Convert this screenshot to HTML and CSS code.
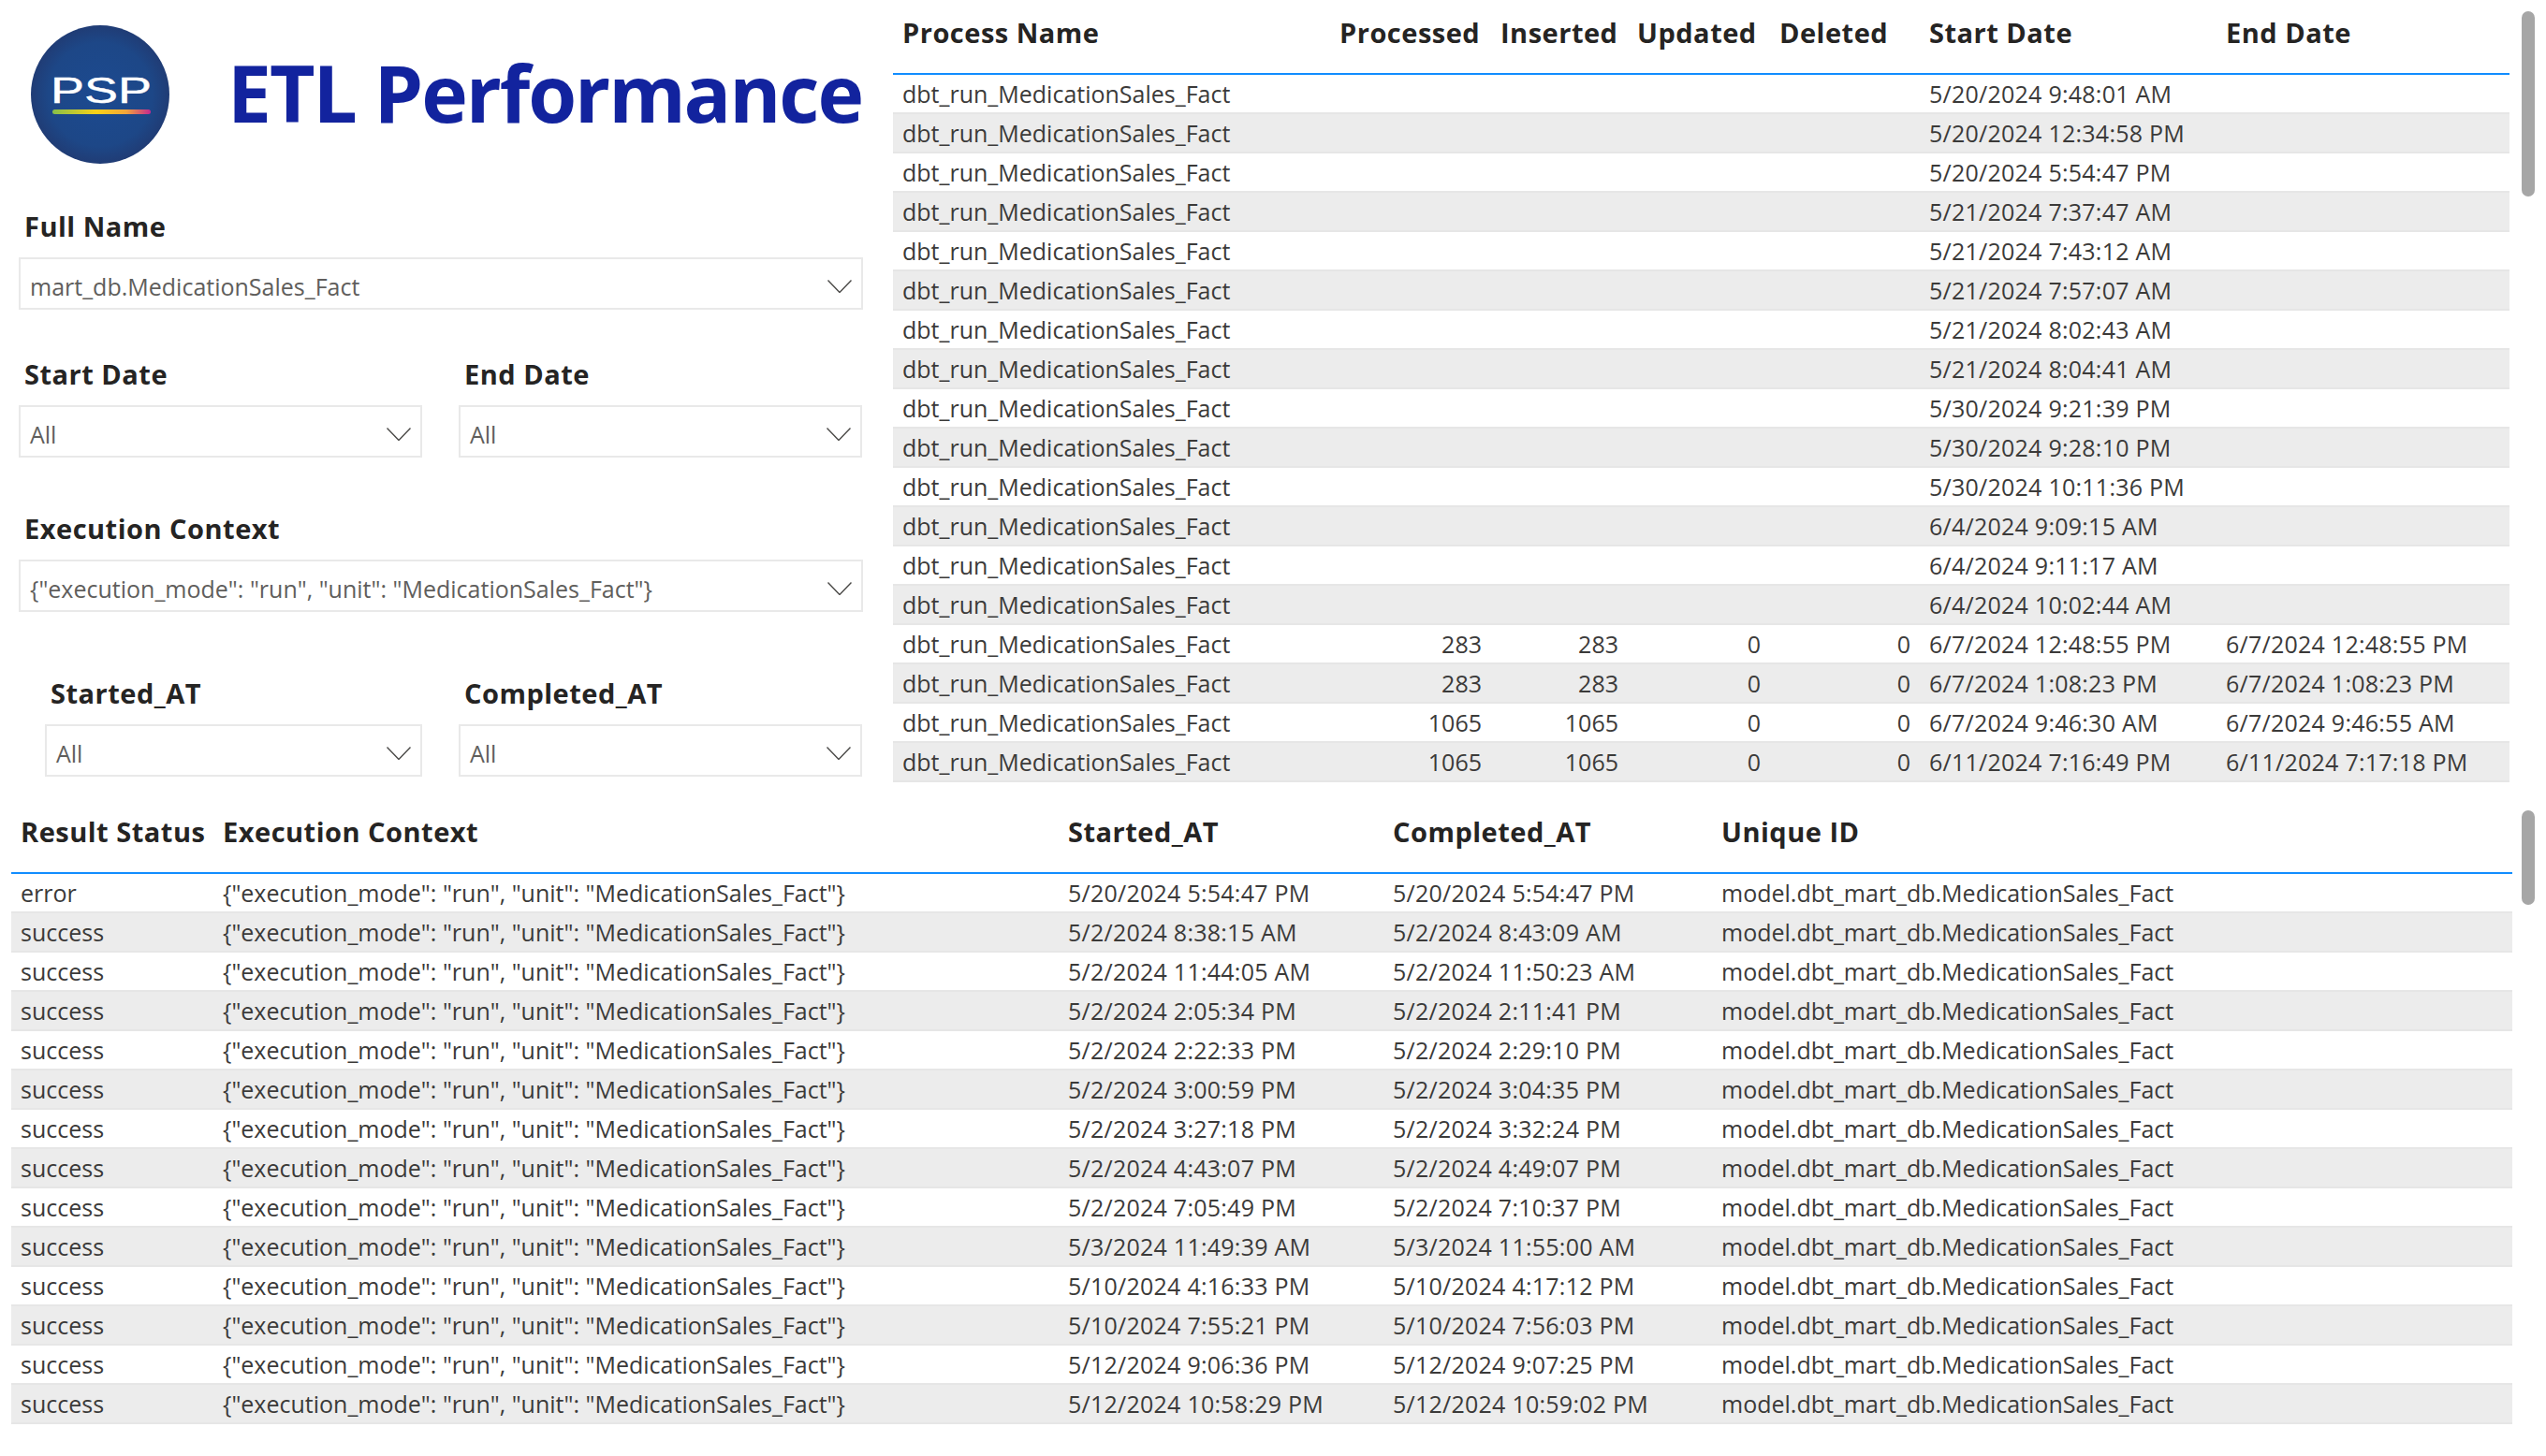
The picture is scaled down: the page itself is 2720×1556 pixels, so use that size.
FILE: index.html
```html
<!DOCTYPE html>
<html lang="en">
<head>
  <meta charset="UTF-8">
  <title>ETL Performance</title>
  <link rel="stylesheet" href="styles.css">
</head>
<body>

  <section class="topSection">
    <aside class="filters">
      <header class="brand">
        <svg class="brand__logo" viewBox="0 0 148 148">
          <defs>
            <radialGradient id="logoBg" cx="50%" cy="50%" r="50%">
              <stop offset="0" stop-color="#1c4a90"/>
              <stop offset="0.75" stop-color="#1d4787"/>
              <stop offset="1" stop-color="#203c75"/>
            </radialGradient>
            <linearGradient id="logoBar">
              <stop offset="0" stop-color="#86bf4a"/>
              <stop offset="0.45" stop-color="#fbd116"/>
              <stop offset="0.75" stop-color="#f2a53a"/>
              <stop offset="1" stop-color="#c4278f"/>
            </linearGradient>
          </defs>
          <circle cx="74" cy="74" r="74" fill="url(#logoBg)"/>
          <text class="brand__logoText" x="21" y="83" textLength="108" lengthAdjust="spacingAndGlyphs">PSP</text>
          <rect x="23" y="90" width="105" height="5" rx="2.5" fill="url(#logoBar)"/>
        </svg>
        <h1 class="brand__title">ETL Performance</h1>
      </header>

      <div class="filter filter--fullName">
        <span class="filter__label">Full Name</span>
        <div class="filter__box">
          <span class="filter__value">mart_db.MedicationSales_Fact</span>
          <svg class="filter__chevron" viewBox="0 0 26 14"><polyline points="0.5,0.5 13,13.5 25.5,0.5"/></svg>
        </div>
      </div>

      <div class="filterRow filterRow--dates">
        <div class="filter">
          <span class="filter__label">Start Date</span>
          <div class="filter__box">
            <span class="filter__value">All</span>
            <svg class="filter__chevron" viewBox="0 0 26 14"><polyline points="0.5,0.5 13,13.5 25.5,0.5"/></svg>
          </div>
        </div>
        <div class="filter">
          <span class="filter__label">End Date</span>
          <div class="filter__box">
            <span class="filter__value">All</span>
            <svg class="filter__chevron" viewBox="0 0 26 14"><polyline points="0.5,0.5 13,13.5 25.5,0.5"/></svg>
          </div>
        </div>
      </div>

      <div class="filter filter--context">
        <span class="filter__label">Execution Context</span>
        <div class="filter__box">
          <span class="filter__value">{"execution_mode": "run", "unit": "MedicationSales_Fact"}</span>
          <svg class="filter__chevron" viewBox="0 0 26 14"><polyline points="0.5,0.5 13,13.5 25.5,0.5"/></svg>
        </div>
      </div>

      <div class="filterRow filterRow--times">
        <div class="filter filter--indented">
          <span class="filter__label">Started_AT</span>
          <div class="filter__box">
            <span class="filter__value">All</span>
            <svg class="filter__chevron" viewBox="0 0 26 14"><polyline points="0.5,0.5 13,13.5 25.5,0.5"/></svg>
          </div>
        </div>
        <div class="filter">
          <span class="filter__label">Completed_AT</span>
          <div class="filter__box">
            <span class="filter__value">All</span>
            <svg class="filter__chevron" viewBox="0 0 26 14"><polyline points="0.5,0.5 13,13.5 25.5,0.5"/></svg>
          </div>
        </div>
      </div>
    </aside>

    <div class="processList">
      <div class="processList__header">
        <span>Process Name</span>
        <span>Processed</span>
        <span>Inserted</span>
        <span>Updated</span>
        <span>Deleted</span>
        <span>Start Date</span>
        <span>End Date</span>
      </div>
      <div class="processList__row"><span>dbt_run_MedicationSales_Fact</span><span class="num"></span><span class="num"></span><span class="num"></span><span class="num"></span><span>5/20/2024 9:48:01 AM</span><span></span></div>
      <div class="processList__row"><span>dbt_run_MedicationSales_Fact</span><span class="num"></span><span class="num"></span><span class="num"></span><span class="num"></span><span>5/20/2024 12:34:58 PM</span><span></span></div>
      <div class="processList__row"><span>dbt_run_MedicationSales_Fact</span><span class="num"></span><span class="num"></span><span class="num"></span><span class="num"></span><span>5/20/2024 5:54:47 PM</span><span></span></div>
      <div class="processList__row"><span>dbt_run_MedicationSales_Fact</span><span class="num"></span><span class="num"></span><span class="num"></span><span class="num"></span><span>5/21/2024 7:37:47 AM</span><span></span></div>
      <div class="processList__row"><span>dbt_run_MedicationSales_Fact</span><span class="num"></span><span class="num"></span><span class="num"></span><span class="num"></span><span>5/21/2024 7:43:12 AM</span><span></span></div>
      <div class="processList__row"><span>dbt_run_MedicationSales_Fact</span><span class="num"></span><span class="num"></span><span class="num"></span><span class="num"></span><span>5/21/2024 7:57:07 AM</span><span></span></div>
      <div class="processList__row"><span>dbt_run_MedicationSales_Fact</span><span class="num"></span><span class="num"></span><span class="num"></span><span class="num"></span><span>5/21/2024 8:02:43 AM</span><span></span></div>
      <div class="processList__row"><span>dbt_run_MedicationSales_Fact</span><span class="num"></span><span class="num"></span><span class="num"></span><span class="num"></span><span>5/21/2024 8:04:41 AM</span><span></span></div>
      <div class="processList__row"><span>dbt_run_MedicationSales_Fact</span><span class="num"></span><span class="num"></span><span class="num"></span><span class="num"></span><span>5/30/2024 9:21:39 PM</span><span></span></div>
      <div class="processList__row"><span>dbt_run_MedicationSales_Fact</span><span class="num"></span><span class="num"></span><span class="num"></span><span class="num"></span><span>5/30/2024 9:28:10 PM</span><span></span></div>
      <div class="processList__row"><span>dbt_run_MedicationSales_Fact</span><span class="num"></span><span class="num"></span><span class="num"></span><span class="num"></span><span>5/30/2024 10:11:36 PM</span><span></span></div>
      <div class="processList__row"><span>dbt_run_MedicationSales_Fact</span><span class="num"></span><span class="num"></span><span class="num"></span><span class="num"></span><span>6/4/2024 9:09:15 AM</span><span></span></div>
      <div class="processList__row"><span>dbt_run_MedicationSales_Fact</span><span class="num"></span><span class="num"></span><span class="num"></span><span class="num"></span><span>6/4/2024 9:11:17 AM</span><span></span></div>
      <div class="processList__row"><span>dbt_run_MedicationSales_Fact</span><span class="num"></span><span class="num"></span><span class="num"></span><span class="num"></span><span>6/4/2024 10:02:44 AM</span><span></span></div>
      <div class="processList__row"><span>dbt_run_MedicationSales_Fact</span><span class="num">283</span><span class="num">283</span><span class="num">0</span><span class="num">0</span><span>6/7/2024 12:48:55 PM</span><span>6/7/2024 12:48:55 PM</span></div>
      <div class="processList__row"><span>dbt_run_MedicationSales_Fact</span><span class="num">283</span><span class="num">283</span><span class="num">0</span><span class="num">0</span><span>6/7/2024 1:08:23 PM</span><span>6/7/2024 1:08:23 PM</span></div>
      <div class="processList__row"><span>dbt_run_MedicationSales_Fact</span><span class="num">1065</span><span class="num">1065</span><span class="num">0</span><span class="num">0</span><span>6/7/2024 9:46:30 AM</span><span>6/7/2024 9:46:55 AM</span></div>
      <div class="processList__row"><span>dbt_run_MedicationSales_Fact</span><span class="num">1065</span><span class="num">1065</span><span class="num">0</span><span class="num">0</span><span>6/11/2024 7:16:49 PM</span><span>6/11/2024 7:17:18 PM</span></div>
    </div>
    <div class="scrollThumb scrollThumb--top"></div>
  </section>

  <section class="bottomSection">
    <div class="resultList">
      <div class="resultList__header">
        <span>Result Status</span>
        <span>Execution Context</span>
        <span>Started_AT</span>
        <span>Completed_AT</span>
        <span>Unique ID</span>
      </div>
      <div class="resultList__row"><span>error</span><span>{"execution_mode": "run", "unit": "MedicationSales_Fact"}</span><span>5/20/2024 5:54:47 PM</span><span>5/20/2024 5:54:47 PM</span><span>model.dbt_mart_db.MedicationSales_Fact</span></div>
      <div class="resultList__row"><span>success</span><span>{"execution_mode": "run", "unit": "MedicationSales_Fact"}</span><span>5/2/2024 8:38:15 AM</span><span>5/2/2024 8:43:09 AM</span><span>model.dbt_mart_db.MedicationSales_Fact</span></div>
      <div class="resultList__row"><span>success</span><span>{"execution_mode": "run", "unit": "MedicationSales_Fact"}</span><span>5/2/2024 11:44:05 AM</span><span>5/2/2024 11:50:23 AM</span><span>model.dbt_mart_db.MedicationSales_Fact</span></div>
      <div class="resultList__row"><span>success</span><span>{"execution_mode": "run", "unit": "MedicationSales_Fact"}</span><span>5/2/2024 2:05:34 PM</span><span>5/2/2024 2:11:41 PM</span><span>model.dbt_mart_db.MedicationSales_Fact</span></div>
      <div class="resultList__row"><span>success</span><span>{"execution_mode": "run", "unit": "MedicationSales_Fact"}</span><span>5/2/2024 2:22:33 PM</span><span>5/2/2024 2:29:10 PM</span><span>model.dbt_mart_db.MedicationSales_Fact</span></div>
      <div class="resultList__row"><span>success</span><span>{"execution_mode": "run", "unit": "MedicationSales_Fact"}</span><span>5/2/2024 3:00:59 PM</span><span>5/2/2024 3:04:35 PM</span><span>model.dbt_mart_db.MedicationSales_Fact</span></div>
      <div class="resultList__row"><span>success</span><span>{"execution_mode": "run", "unit": "MedicationSales_Fact"}</span><span>5/2/2024 3:27:18 PM</span><span>5/2/2024 3:32:24 PM</span><span>model.dbt_mart_db.MedicationSales_Fact</span></div>
      <div class="resultList__row"><span>success</span><span>{"execution_mode": "run", "unit": "MedicationSales_Fact"}</span><span>5/2/2024 4:43:07 PM</span><span>5/2/2024 4:49:07 PM</span><span>model.dbt_mart_db.MedicationSales_Fact</span></div>
      <div class="resultList__row"><span>success</span><span>{"execution_mode": "run", "unit": "MedicationSales_Fact"}</span><span>5/2/2024 7:05:49 PM</span><span>5/2/2024 7:10:37 PM</span><span>model.dbt_mart_db.MedicationSales_Fact</span></div>
      <div class="resultList__row"><span>success</span><span>{"execution_mode": "run", "unit": "MedicationSales_Fact"}</span><span>5/3/2024 11:49:39 AM</span><span>5/3/2024 11:55:00 AM</span><span>model.dbt_mart_db.MedicationSales_Fact</span></div>
      <div class="resultList__row"><span>success</span><span>{"execution_mode": "run", "unit": "MedicationSales_Fact"}</span><span>5/10/2024 4:16:33 PM</span><span>5/10/2024 4:17:12 PM</span><span>model.dbt_mart_db.MedicationSales_Fact</span></div>
      <div class="resultList__row"><span>success</span><span>{"execution_mode": "run", "unit": "MedicationSales_Fact"}</span><span>5/10/2024 7:55:21 PM</span><span>5/10/2024 7:56:03 PM</span><span>model.dbt_mart_db.MedicationSales_Fact</span></div>
      <div class="resultList__row"><span>success</span><span>{"execution_mode": "run", "unit": "MedicationSales_Fact"}</span><span>5/12/2024 9:06:36 PM</span><span>5/12/2024 9:07:25 PM</span><span>model.dbt_mart_db.MedicationSales_Fact</span></div>
      <div class="resultList__row"><span>success</span><span>{"execution_mode": "run", "unit": "MedicationSales_Fact"}</span><span>5/12/2024 10:58:29 PM</span><span>5/12/2024 10:59:02 PM</span><span>model.dbt_mart_db.MedicationSales_Fact</span></div>
    </div>
    <div class="scrollThumb scrollThumb--bottom"></div>
  </section>

</body>
</html>
```

FILE: styles.css
```css
* {
  box-sizing: border-box;
  padding: 0;
  margin: 0;
}
body {
  width: 2720px;
  height: 1556px;
  overflow: hidden;
  background-color: #fff;
  font-family: "Open Sans", "Noto Sans", sans-serif;
  color: #252423;
}
.topSection {
  display: flex;
  height: 854px;
  position: relative;
}
.bottomSection {
  padding-left: 12px;
  position: relative;
}

/* left column */
.filters {
  width: 954px;
  padding: 27px 32px 0 20px;
}
.brand {
  display: flex;
  align-items: center;
  height: 148px;
  padding-left: 13px;
  margin-bottom: 51px;
}
.brand__logo {
  width: 148px;
  height: 148px;
  flex-shrink: 0;
}
.brand__logoText {
  font-family: "Liberation Sans", sans-serif;
  font-size: 38px;
  fill: #fff;
  stroke: #fff;
  stroke-width: 0.4;
}
.brand__title {
  margin-left: 62px;
  margin-top: -4px;
  font-size: 84px;
  line-height: 112px;
  font-weight: 700;
  letter-spacing: -2.1px;
  color: #12239e;
  white-space: nowrap;
}
.filter__label {
  display: block;
  height: 32px;
  padding-left: 6px;
  margin-bottom: 17px;
  font-size: 29px;
  line-height: 32px;
  font-weight: 700;
  letter-spacing: 0.5px;
}
.filter__box {
  display: flex;
  align-items: center;
  justify-content: space-between;
  height: 56px;
  padding: 5px 10px 0 10px;
  border: 2px solid #e9e9e9;
}
.filter__value {
  font-size: 25px;
  color: #605e5c;
  white-space: nowrap;
}
.filter__chevron {
  width: 26px;
  height: 14px;
  flex-shrink: 0;
}
.filter__chevron polyline {
  fill: none;
  stroke: #4a4947;
  stroke-width: 1.4;
}
.filterRow {
  display: grid;
  grid-template-columns: 431px 431px;
  column-gap: 39px;
}
.filterRow--dates {
  margin-top: 53px;
}
.filter--context {
  margin-top: 60px;
}
.filterRow--times {
  margin-top: 71px;
}
.filter--indented {
  padding-left: 28px;
}

/* tables */
.processList {
  width: 1727px;
  font-size: 25px;
}
.resultList {
  width: 2672px;
  font-size: 25px;
}
.processList__header, .processList__row {
  display: grid;
  grid-template-columns: 467px 172px 146px 152px 160px 317px 313px;
}
.resultList__header, .resultList__row {
  display: grid;
  grid-template-columns: 216px 903px 347px 351px 855px;
}
.processList__header, .resultList__header {
  height: 80px;
  padding-top: 16px;
  border-bottom: 2px solid #118dff;
  font-size: 29px;
  line-height: 38px;
  font-weight: 700;
  letter-spacing: 0.5px;
  white-space: nowrap;
}
.processList__row, .resultList__row {
  height: 42px;
  line-height: 41px;
  color: #3b3a39;
  border-bottom: 2px solid #e6e6e6;
  white-space: nowrap;
}
.processList__row:nth-child(odd), .resultList__row:nth-child(odd) {
  background-color: #ececec;
}
.processList__header span, .processList__row span,
.resultList__header span, .resultList__row span {
  padding: 0 10px;
}
.processList__row .num {
  text-align: right;
}
.processList__row span:nth-child(n+6),
.resultList__row span:nth-child(3),
.resultList__row span:nth-child(4) {
  letter-spacing: 0.25px;
}
.scrollThumb {
  position: absolute;
  left: 2694px;
  top: 12px;
  width: 14px;
  background-color: #a6a6a6;
  border-radius: 7px;
}
.scrollThumb--top {
  height: 198px;
}
.scrollThumb--bottom {
  height: 101px;
}
```
